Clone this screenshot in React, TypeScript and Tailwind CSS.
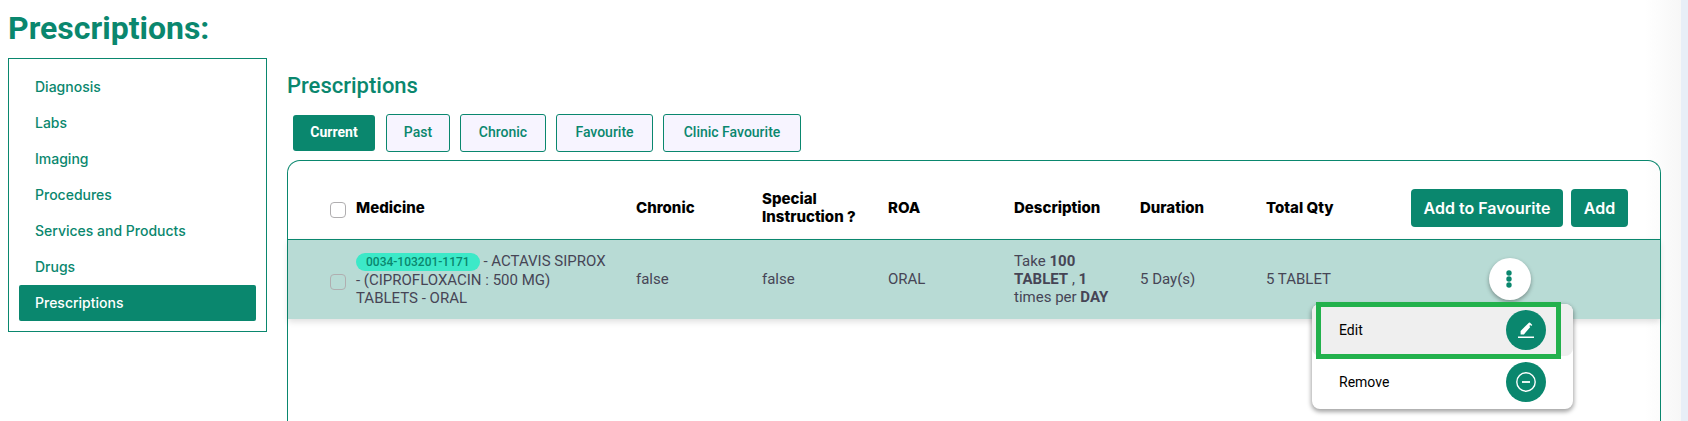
import { useState } from "react";

type Prescription = {
  code: string;
  name: string;
  chronic: boolean;
  specialInstruction: boolean;
  roa: string;
  dose: string;
  times: number;
  period: string;
  duration: string;
  totalQty: string;
};

const sections = [
  "Diagnosis",
  "Labs",
  "Imaging",
  "Procedures",
  "Services and Products",
  "Drugs",
  "Prescriptions",
];

const tabs = [
  { label: "Current", width: "w-[82px]" },
  { label: "Past", width: "w-16" },
  { label: "Chronic", width: "w-[86px]" },
  { label: "Favourite", width: "w-[97px]" },
  { label: "Clinic Favourite", width: "w-[138px]" },
];

const prescriptions: Prescription[] = [
  {
    code: "0034-103201-1171",
    name: "ACTAVIS SIPROX - (CIPROFLOXACIN : 500 MG) TABLETS - ORAL",
    chronic: false,
    specialInstruction: false,
    roa: "ORAL",
    dose: "100 TABLET",
    times: 1,
    period: "DAY",
    duration: "5 Day(s)",
    totalQty: "5 TABLET",
  },
];

const checkboxClass =
  "block size-4 appearance-none rounded-[4px] border border-[#b0aeb0] checked:bg-[#0a876e]";

function RowMenu() {
  return (
    <div
      role="menu"
      className="absolute top-16 right-[87px] z-10 w-[261px] rounded-lg bg-white text-[14px] text-black shadow-[0_2px_4px_1px_rgba(0,0,0,0.35)]"
    >
      <button
        role="menuitem"
        className="flex h-[52px] w-full items-center justify-between rounded-lg bg-[#efefef] pr-[27px] pl-[27px]"
      >
        Edit
        <span className="flex size-10 items-center justify-center rounded-full bg-[#0a876e]">
          <svg width="18" height="18" viewBox="0 0 18 18" fill="white">
            <path d="M1 15.6h16v1.4h-16zM3.6 13.4V10L11.9 1.7q.6-.6 1.2 0l2.2 2.2-1.1 1.1-1-.9-.9.9 1 .9-6.4 7.5z" />
          </svg>
        </span>
      </button>
      <button
        role="menuitem"
        className="flex h-[53px] w-full items-center justify-between rounded-lg pr-[27px] pl-[27px]"
      >
        Remove
        <span className="flex size-10 items-center justify-center rounded-full bg-[#0a876e]">
          <svg
            width="20"
            height="20"
            viewBox="0 0 20 20"
            fill="none"
            stroke="white"
            strokeWidth="1.4"
          >
            <circle cx="10" cy="10" r="9.2" />
            <path d="M6 10h8" strokeWidth="1.8" />
          </svg>
        </span>
      </button>
      <div className="pointer-events-none absolute -top-0.5 left-1 h-[57px] w-[245px] border-[5px] border-[#22b14c]" />
    </div>
  );
}

export default function App() {
  const [section, setSection] = useState("Prescriptions");
  const [tab, setTab] = useState("Current");
  const [menuOpen, setMenuOpen] = useState(true);

  return (
    <div className="flex min-h-screen bg-[#e8eef7] pr-[7px] font-['Roboto',sans-serif]">
      <div className="flex flex-1 flex-col bg-[linear-gradient(to_left,#f7f7f7,#ffffff_36px)] pl-2">
        <h1 className="pt-2 text-[32px] leading-10 font-bold text-[#0a876e]">
          Prescriptions:
        </h1>
        <div className="flex flex-1 items-start gap-5 pt-2.5 pr-5">
          <nav className="w-[259px] shrink-0 border border-[#0a876e] p-2.5 font-['Inter',sans-serif] text-[14px] font-medium">
            {sections.map((item) => (
              <a
                key={item}
                href="#"
                onClick={() => setSection(item)}
                className={`flex h-9 items-center rounded-[2px] px-4 pb-0.5 ${
                  item === section ? "bg-[#0a876e] text-white" : "text-[#0a876e]"
                }`}
              >
                {item}
              </a>
            ))}
          </nav>

          <main className="flex min-w-0 flex-1 flex-col self-stretch pt-3">
            <h2 className="text-[22px] leading-8 font-medium text-[#0a876e]">
              Prescriptions
            </h2>
            <div className="flex items-center gap-2.5 pt-3 pb-2 pl-1.5">
              {tabs.map(({ label, width }) => (
                <button
                  key={label}
                  onClick={() => setTab(label)}
                  className={`rounded-[3px] pb-0.5 text-[14px] ${width} ${
                    label === tab
                      ? "mr-px h-9 bg-[#0a876e] font-bold text-white"
                      : "h-[38px] border border-[#0a876e] bg-[#f7f4ff] font-medium text-[#0a876e]"
                  }`}
                >
                  {label}
                </button>
              ))}
            </div>

            <div className="flex-1 rounded-t-[13px] border border-b-0 border-[#0a876e]">
              <table className="w-full table-fixed border-collapse text-left">
                <colgroup>
                  <col className="w-[68px]" />
                  <col className="w-[280px]" />
                  <col className="w-[126px]" />
                  <col className="w-[126px]" />
                  <col className="w-[126px]" />
                  <col className="w-[126px]" />
                  <col className="w-[126px]" />
                  <col className="w-[126px]" />
                  <col />
                </colgroup>
                <thead>
                  <tr className="h-[78px] border-b border-[#0a876e] font-['Inter',sans-serif] text-[15px] leading-[18px] text-black [&>th]:pt-4 [&>th]:font-extrabold">
                    <th className="pl-[42px]">
                      <input
                        type="checkbox"
                        aria-label="Select all"
                        className={`mt-1 ${checkboxClass}`}
                      />
                    </th>
                    <th>Medicine</th>
                    <th>Chronic</th>
                    <th className="pr-4">Special Instruction ?</th>
                    <th>ROA</th>
                    <th>Description</th>
                    <th>Duration</th>
                    <th>Total Qty</th>
                    <th>
                      <div className="flex justify-end gap-2 pr-8 text-[16px] font-semibold text-white">
                        <button className="h-[38px] w-[152px] rounded-[4px] bg-[#0a876e]">
                          Add to Favourite
                        </button>
                        <button className="h-[38px] w-[57px] rounded-[4px] bg-[#0a876e]">
                          Add
                        </button>
                      </div>
                    </th>
                  </tr>
                </thead>
                <tbody>
                  {prescriptions.map((row) => (
                    <tr
                      key={row.code}
                      className="h-20 bg-[#b8dbd5] text-[15px] leading-[18px] text-[#464555] shadow-[0_3px_6px_rgba(0,0,0,0.12)]"
                    >
                      <td className="pt-1.5 pl-[42px]">
                        <input
                          type="checkbox"
                          aria-label={`Select ${row.code}`}
                          className={checkboxClass}
                        />
                      </td>
                      <td className="pr-6">
                        <span className="inline-block rounded-full bg-[#3ce9c8] px-2.5 text-[12px] font-medium text-[#0a876e]">
                          {row.code}
                        </span>{" "}
                        - {row.name}
                      </td>
                      <td>{String(row.chronic)}</td>
                      <td>{String(row.specialInstruction)}</td>
                      <td>{row.roa}</td>
                      <td className="pr-6">
                        Take <b>{row.dose}</b> , <b>{row.times}</b> times per{" "}
                        <b>{row.period}</b>
                      </td>
                      <td>{row.duration}</td>
                      <td>{row.totalQty}</td>
                      <td className="relative">
                        <button
                          aria-label="Row actions"
                          onClick={() => setMenuOpen(!menuOpen)}
                          className="ml-[97px] flex size-[42px] items-center justify-center rounded-full bg-white pr-0.5 shadow-[0_2px_4px_rgba(0,0,0,0.35)]"
                        >
                          <svg width="6" height="18" viewBox="0 0 6 18" fill="#0a876e">
                            <circle cx="3" cy="3" r="2.7" />
                            <circle cx="3" cy="9" r="2.7" />
                            <circle cx="3" cy="15" r="2.7" />
                          </svg>
                        </button>
                        {menuOpen && <RowMenu />}
                      </td>
                    </tr>
                  ))}
                </tbody>
              </table>
            </div>
          </main>
        </div>
      </div>
    </div>
  );
}
